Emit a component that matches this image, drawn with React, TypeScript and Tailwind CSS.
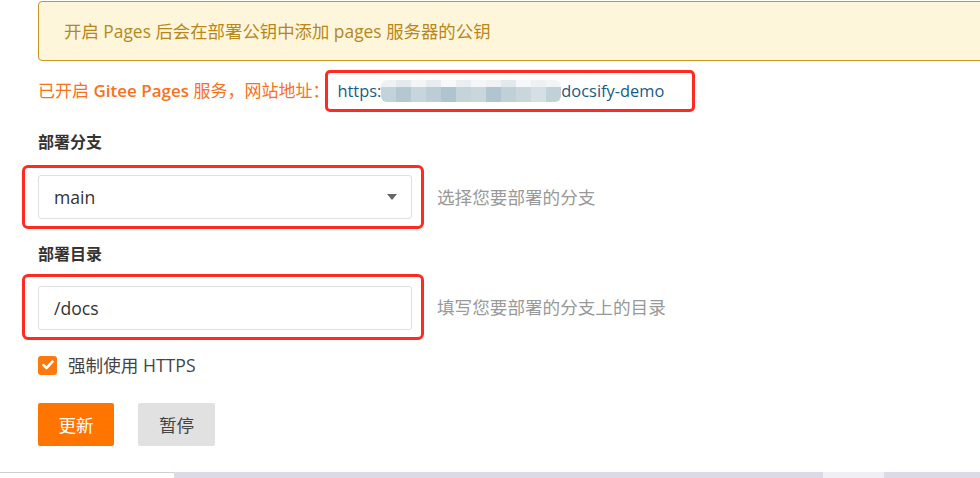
const font = { fontFamily: '"Open Sans", "Noto Sans CJK SC", sans-serif' };

const mosaicTop = ['#eef2f4', '#e3eaee', '#f3f6f7', '#e6ecef', '#f6f8f9', '#e9eff1', '#f4f6f7', '#eef2f4', '#e2e9ec', '#f5f7f8', '#edf1f3', '#f2f5f6'];
const mosaicBottom = ['#c3d3da', '#b4c8d1', '#c7d6dc', '#bccdd5', '#aec4ce', '#c5d4db', '#c9d7dd', '#b0c5cf', '#bfd0d7', '#c9d7dd', '#d5e0e5', '#c1d1d8'];

function Mosaic() {
  return (
    <span className="inline-flex h-[22px] w-[180px] flex-col overflow-hidden rounded-[6px] align-middle">
      <span className="flex h-[7px]">
        {mosaicTop.map((c, i) => (
          <span key={i} className="h-full flex-1" style={{ background: c }} />
        ))}
      </span>
      <span className="flex flex-1">
        {mosaicBottom.map((c, i) => (
          <span key={i} className="h-full flex-1" style={{ background: c }} />
        ))}
      </span>
    </span>
  );
}

export default function App() {
  return (
    <div className="relative h-[478px] w-[980px] overflow-hidden bg-white text-[17.6px] leading-[24px]" style={font}>
      <div className="pl-[38px]">
        {/* notice */}
        <div className="mt-px flex h-[60px] w-[980px] items-center rounded-[4px] border border-[#c99527] bg-[#fef6da] pl-[25px] text-[17.4px] text-[#b8861b]">
          开启 Pages 后会在部署公钥中添加 pages 服务器的公钥
        </div>

        <div className="mt-[9px] flex items-center">
          <span className="text-[17px] text-[#f6721b]">
            已开启 <span className="font-semibold">Gitee Pages</span> 服务，网站地址：
          </span>
          <div className="-ml-[4px] flex h-[42px] w-[370px] items-center rounded-[5px] border-[3px] border-[#ff2a22] pl-[9px] text-[16.4px] font-medium text-[#1c5a84]">
            <span>https:</span>
            <Mosaic />
            <span>docsify-demo</span>
          </div>
        </div>

        <div className="mt-[18px] text-[16px] font-bold text-[#333]">部署分支</div>
        <div className="mt-[11px] flex items-center">
          <div className="-ml-[16px] w-[402px] rounded-[6px] border-[3px] border-[#ff2a22] py-[7px] pl-[13px] pr-[9px]">
            <div className="flex h-[44px] items-center justify-between rounded-[3px] border border-[#dde1e6] pl-[15px] pr-[14px] text-[#333]">
              <span>main</span>
              <svg width="10" height="6" viewBox="0 0 10 6"><path d="M0 0h10L5 6z" fill="#666" /></svg>
            </div>
          </div>
          <span className="ml-[13px] text-[#999]">选择您要部署的分支</span>
        </div>

        <div className="mt-[13px] text-[16px] font-bold text-[#333]">部署目录</div>
        <div className="mt-[8px] flex items-center">
          <div className="-ml-[16px] w-[402px] rounded-[6px] border-[3px] border-[#ff2a22] pb-[7px] pl-[13px] pr-[9px] pt-[9px]">
            <div className="flex h-[44px] items-center rounded-[3px] border border-[#dde1e6] pl-[15px] text-[#333]">/docs</div>
          </div>
          <span className="ml-[13px] text-[#999]">填写您要部署的分支上的目录</span>
        </div>

        <div className="mt-[13px] flex items-center">
          <span className="flex h-[19px] w-[19px] items-center justify-center rounded-[3px] bg-[#fa7a0f]">
            <svg width="12" height="10" viewBox="0 0 12 10"><path d="M1.5 5.2l3 3 6-6.5" fill="none" stroke="#fff" strokeWidth="2.6" strokeLinecap="round" strokeLinejoin="round" /></svg>
          </span>
          <span className="ml-[11px] text-[#444]">强制使用 HTTPS</span>
        </div>

        <div className="mt-[26px] flex gap-[24px]">
          <button className="h-[43px] w-[76px] rounded-[2px] bg-[#ff7500] text-white">更新</button>
          <button className="h-[43px] w-[77px] rounded-[2px] bg-[#e1e1e1] text-[#444]">暂停</button>
        </div>
      </div>

      <div className="absolute bottom-0 left-0 flex h-[6px] w-full">
        <div className="h-full w-[174px] border-t border-[#cfcfcf] bg-white" />
        <div className="h-full w-[649px] bg-[#dcdae6]" />
        <div className="h-full w-[61px] bg-[#f0eff5]" />
        <div className="h-full flex-1 bg-[#dcdae6]" />
      </div>
    </div>
  );
}
